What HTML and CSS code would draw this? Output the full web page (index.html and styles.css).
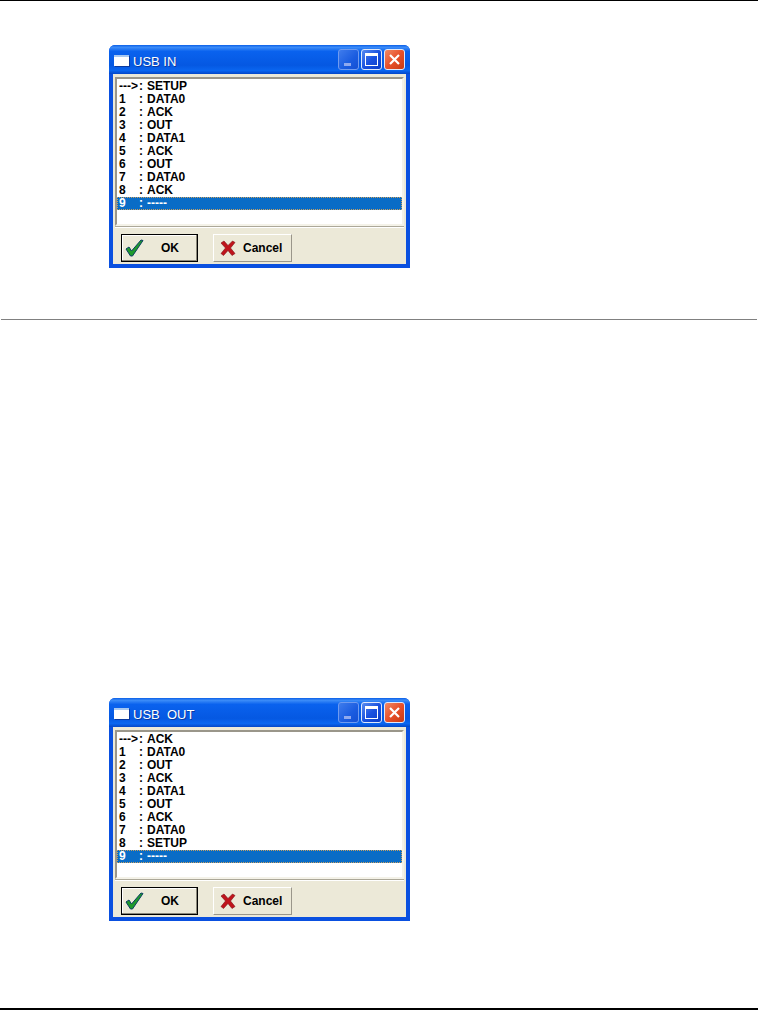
FILE: index.html
```html
<!DOCTYPE html>
<html lang="en">
<head>
  <meta charset="UTF-8" />
  <title>USB IN / USB OUT</title>
  <link rel="stylesheet" href="styles.css">
</head>
<body>
  <div class="page">
    <section class="top-part">
      <div class="dialog">
        <div class="titlebar">
          <span class="app-icon"></span>
          <span class="title">USB IN</span>
          <span class="win-btn btn-min"><span class="min-bar"></span></span>
          <span class="win-btn btn-max"><span class="max-box"></span></span>
          <span class="win-btn btn-close">
            <svg width="13" height="13" viewBox="0 0 13 13"><path d="M2 2 L11 11 M11 2 L2 11" stroke="#fff" stroke-width="2.2" fill="none"/></svg>
          </span>
        </div>
        <div class="body">
          <div class="list">
            <div class="row"><span>---&gt;</span><span>:</span><span>SETUP</span></div>
            <div class="row"><span>1</span><span>:</span><span>DATA0</span></div>
            <div class="row"><span>2</span><span>:</span><span>ACK</span></div>
            <div class="row"><span>3</span><span>:</span><span>OUT</span></div>
            <div class="row"><span>4</span><span>:</span><span>DATA1</span></div>
            <div class="row"><span>5</span><span>:</span><span>ACK</span></div>
            <div class="row"><span>6</span><span>:</span><span>OUT</span></div>
            <div class="row"><span>7</span><span>:</span><span>DATA0</span></div>
            <div class="row"><span>8</span><span>:</span><span>ACK</span></div>
            <div class="row selected"><span>9</span><span>:</span><span>-----</span></div>
          </div>
          <div class="actions">
            <button class="btn btn-ok">
              <svg width="19" height="18" viewBox="0 0 19 18"><path d="M1 10 L4 8 L6.500 12 L16 1 L18 1.500 L7.500 17 L5.500 17 Z" fill="#1f9a2c" stroke="#0b3f63" stroke-width="1"/></svg>
              <span>OK</span>
            </button>
            <button class="btn btn-cancel">
              <svg width="16" height="16" viewBox="0 0 16 16"><path d="M1 3 L4 1 L8 5.500 L12.500 1 L15 2.500 L10.500 8 L15 13.500 L12 15.500 L8 10.500 L3.500 15.500 L1 13.500 L5.500 8 Z" fill="#c0141c" stroke="#7c1116" stroke-width="0.6"/></svg>
              <span>Cancel</span>
            </button>
          </div>
        </div>
      </div>
    </section>

    <section class="bottom-part">
      <div class="dialog">
        <div class="titlebar">
          <span class="app-icon"></span>
          <span class="title">USB&nbsp; OUT</span>
          <span class="win-btn btn-min"><span class="min-bar"></span></span>
          <span class="win-btn btn-max"><span class="max-box"></span></span>
          <span class="win-btn btn-close">
            <svg width="13" height="13" viewBox="0 0 13 13"><path d="M2 2 L11 11 M11 2 L2 11" stroke="#fff" stroke-width="2.2" fill="none"/></svg>
          </span>
        </div>
        <div class="body">
          <div class="list">
            <div class="row"><span>---&gt;</span><span>:</span><span>ACK</span></div>
            <div class="row"><span>1</span><span>:</span><span>DATA0</span></div>
            <div class="row"><span>2</span><span>:</span><span>OUT</span></div>
            <div class="row"><span>3</span><span>:</span><span>ACK</span></div>
            <div class="row"><span>4</span><span>:</span><span>DATA1</span></div>
            <div class="row"><span>5</span><span>:</span><span>OUT</span></div>
            <div class="row"><span>6</span><span>:</span><span>ACK</span></div>
            <div class="row"><span>7</span><span>:</span><span>DATA0</span></div>
            <div class="row"><span>8</span><span>:</span><span>SETUP</span></div>
            <div class="row selected"><span>9</span><span>:</span><span>-----</span></div>
          </div>
          <div class="actions">
            <button class="btn btn-ok">
              <svg width="19" height="18" viewBox="0 0 19 18"><path d="M1 10 L4 8 L6.500 12 L16 1 L18 1.500 L7.500 17 L5.500 17 Z" fill="#1f9a2c" stroke="#0b3f63" stroke-width="1"/></svg>
              <span>OK</span>
            </button>
            <button class="btn btn-cancel">
              <svg width="16" height="16" viewBox="0 0 16 16"><path d="M1 3 L4 1 L8 5.500 L12.500 1 L15 2.500 L10.500 8 L15 13.500 L12 15.500 L8 10.500 L3.500 15.500 L1 13.500 L5.500 8 Z" fill="#c0141c" stroke="#7c1116" stroke-width="0.6"/></svg>
              <span>Cancel</span>
            </button>
          </div>
        </div>
      </div>
    </section>
  </div>
</body>
</html>
```

FILE: styles.css
```css
html, body {
  margin: 0;
  padding: 0;
  background: #fff;
}
.page {
  height: 1010px;
  box-sizing: border-box;
  overflow: hidden;
  display: flex;
  flex-direction: column;
  border-top: 1px solid #000;
  font-family: "Liberation Sans", Arial, sans-serif;
}
.top-part {
  height: 319px;
  padding: 44px 0 0 108px;
  box-sizing: border-box;
  border-bottom: 1px solid #808080;
  margin: 0 1px;
  flex: none;
}
.bottom-part {
  flex: 1;
  padding: 378px 0 0 109px;
  border-bottom: 2px solid #000;
}
.dialog {
  width: 301px;
  height: 223px;
  box-sizing: border-box;
  display: flex;
  flex-direction: column;
  background: #0a50e0;
  border-radius: 6px 6px 0 0;
  padding: 0 4px 4px 4px;
}
.titlebar {
  height: 29px;
  margin: 0 -4px;
  padding: 0 5px;
  display: flex;
  align-items: center;
  border-radius: 6px 6px 0 0;
  background: linear-gradient(180deg, #0a5fe8 0%, #3c8cf8 8%, #0a62ee 22%, #0558e2 70%, #0a66f0 88%, #0447c8 100%);
}
.app-icon {
  width: 15px;
  height: 11px;
  background: #fff;
  border-top: 2px solid #a8c8f0;
  box-sizing: border-box;
  box-shadow: 1px 1px 0 #0a3aa0;
  margin-right: 4px;
  position: relative;
  top: 1px;
}
.title {
  flex: 1;
  color: #fff;
  font-size: 13px;
  line-height: 15px;
  padding-top: 3px;
  text-shadow: 1px 1px 0 #0a3aa0;
}
.win-btn {
  width: 21px;
  height: 21px;
  box-sizing: border-box;
  border: 1px solid #dfe8fb;
  border-radius: 3px;
  margin-left: 2px;
  display: flex;
  align-items: center;
  justify-content: center;
  background: linear-gradient(135deg, #5a8cf0 0%, #1a52e0 50%, #0a3cc8 100%);
}
.btn-min {
  border-color: #6f9bf0;
  background: linear-gradient(135deg, #3f7cec 0%, #1a5ce0 60%, #1450d4 100%);
  align-items: flex-end;
}
.min-bar {
  width: 7px;
  height: 3px;
  background: #8fa9ee;
  margin: 0 0 3px -2px;
}
.max-box {
  width: 13px;
  height: 13px;
  box-sizing: border-box;
  border: 1px solid #fff;
  border-top-width: 3px;
}
.btn-close {
  background: linear-gradient(135deg, #f08a66 0%, #e8502a 50%, #c83a14 100%);
}
.body {
  flex: 1;
  background: #ece9d8;
  display: flex;
  flex-direction: column;
  padding: 0 2px;
}
.list {
  height: 149px;
  box-sizing: border-box;
  margin-top: 3px;
  background: #fff;
  border-top: 2px solid #9a968a;
  border-left: 2px solid #9a968a;
  border-right: 2px solid #f4f2e8;
  border-bottom: 2px solid #f4f2e8;
  padding-top: 1px;
}
.row {
  height: 13px;
  display: grid;
  grid-template-columns: 20px 8px 1fr;
  padding-left: 2px;
  font-size: 12px;
  font-weight: bold;
  line-height: 13px;
  color: #000;
}
.selected {
  background: #0a6cc6;
  color: #fff;
  outline: 1px dotted #c9a060;
  outline-offset: -1px;
}
.actions {
  flex: 1;
  border-top: 1px solid #aca899;
  box-shadow: inset 0 1px 0 #fff;
  display: flex;
  align-items: flex-start;
  padding: 7px 0 0 6px;
  gap: 15px;
}
.btn {
  height: 28px;
  padding: 0;
  display: flex;
  align-items: center;
  font-family: "Liberation Sans", Arial, sans-serif;
  font-size: 12px;
  font-weight: bold;
  color: #000;
  background: #ece9d8;
  box-sizing: border-box;
}
.btn-ok {
  width: 77px;
  border: 1px solid #000;
  box-shadow: inset -1px -1px 0 #8a8778, inset 1px 1px 0 #fff;
  padding-left: 3px;
}
.btn-ok span {
  margin-left: 17px;
}
.btn-cancel {
  width: 79px;
  border: 1px solid;
  border-color: #fff #9a968a #9a968a #fff;
  padding-left: 6px;
}
.btn-cancel span {
  margin-left: 7px;
}
```
